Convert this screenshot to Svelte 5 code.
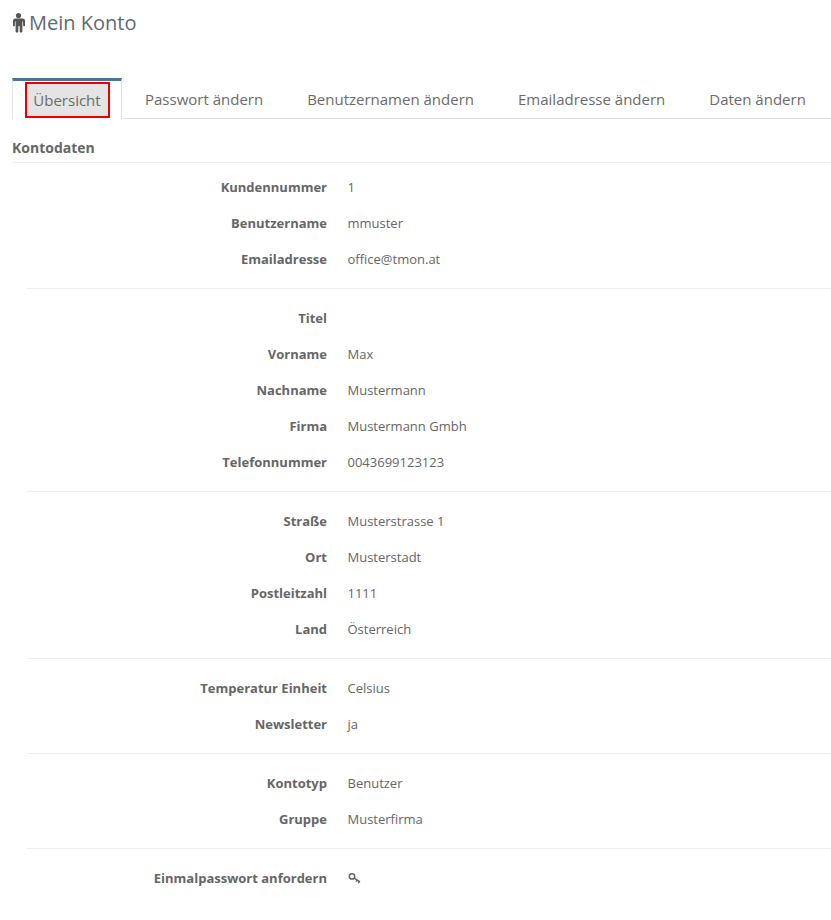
<script>
  const tabs = ["Übersicht", "Passwort ändern", "Benutzernamen ändern", "Emailadresse ändern", "Daten ändern"];

  const groups = [
    [
      ["Kundennummer", "1"],
      ["Benutzername", "mmuster"],
      ["Emailadresse", "office@tmon.at"]
    ],
    [
      ["Titel", ""],
      ["Vorname", "Max"],
      ["Nachname", "Mustermann"],
      ["Firma", "Mustermann Gmbh"],
      ["Telefonnummer", "0043699123123"]
    ],
    [
      ["Straße", "Musterstrasse 1"],
      ["Ort", "Musterstadt"],
      ["Postleitzahl", "1111"],
      ["Land", "Österreich"]
    ],
    [
      ["Temperatur Einheit", "Celsius"],
      ["Newsletter", "ja"]
    ],
    [
      ["Kontotyp", "Benutzer"],
      ["Gruppe", "Musterfirma"]
    ]
  ];
</script>

<div class="page">
  <h1>
    <svg class="man" viewBox="0 0 13 20" width="13" height="20" aria-hidden="true">
      <circle cx="6.5" cy="2.6" r="2.6" />
      <path d="M2.4 5.6h8.2c1.4 0 2.4 1 2.4 2.2v4.8c0 1.1-1.9 1.1-1.9 0V8.4h-.7v10.2c0 1.5-2.7 1.5-2.7 0V13.2h-1.4v5.4c0 1.5-2.7 1.5-2.7 0V8.4h-.7v4.2c0 1.1-1.9 1.1-1.9 0V7.8c0-1.2 1-2.2 2.4-2.2z" />
    </svg>
    Mein Konto
  </h1>

  <nav class="tabs">
    {#each tabs as tab, i}
      <div class="tab" class:active={i === 0}>
        <span class:marked={i === 0}>{tab}</span>
      </div>
    {/each}
  </nav>

  <h2>Kontodaten</h2>

  <div class="groups">
    {#each groups as rows}
      <section class="group">
        {#each rows as [label, value]}
          <div class="row">
            <div class="label">{label}</div>
            <div class="value">{value}</div>
          </div>
        {/each}
      </section>
    {/each}
    <section class="group last">
      <div class="row">
        <div class="label">Einmalpasswort anfordern</div>
        <div class="value">
          <svg class="key" viewBox="0 0 13 13" width="13" height="13" aria-hidden="true">
            <circle cx="4" cy="4.4" r="2.7" />
            <path d="M6.2 6.2l5.8 3.8M9 8l-.9 1.7M11.2 9.4l-.8 1.8" />
          </svg>
        </div>
      </div>
    </section>
  </div>
</div>

<style>
  :global(body) {
    background: #fff;
  }

  .page {
    padding: 0 0 22px 12px;
    font-family: "Open Sans", sans-serif;
    color: #666;
  }

  h1 {
    display: flex;
    align-items: center;
    gap: 4px;
    margin: 0;
    height: 78px;
    padding-bottom: 33px;
    box-sizing: border-box;
    font-size: 20px;
    font-weight: 400;
    color: #606a73;
  }

  .man {
    fill: #555;
  }

  .tabs {
    display: flex;
    height: 41px;
    box-sizing: border-box;
    border-bottom: 1px solid #e2e2e2;
  }

  .tab {
    display: flex;
    align-items: center;
    justify-content: center;
    box-sizing: border-box;
    height: 41px;
    padding: 0 22px;
    font-size: 15px;
    color: #6b6b6b;
  }

  .tab.active {
    width: 110px;
    margin-right: 1px;
    padding: 0;
    border: 1px solid #e2e2e2;
    border-top: 3px solid #4a7596;
    border-bottom: 0;
    background: #fff;
  }

  .marked {
    display: block;
    box-sizing: border-box;
    width: 85px;
    height: 36px;
    margin-bottom: 1px;
    line-height: 32px;
    text-align: center;
    border: 2px solid #ee0000;
    background: #e4e4e4;
  }

  h2 {
    margin: 0;
    height: 44px;
    line-height: 58px;
    box-sizing: border-box;
    border-bottom: 1px solid #eee;
    font-size: 14px;
    font-weight: 700;
    color: #666;
  }

  .group {
    display: flex;
    flex-direction: column;
    margin-left: 15px;
    padding: 11px 0;
    border-bottom: 1px solid #eee;
  }

  .group:first-child {
    padding-top: 6px;
  }

  .group.last {
    border-bottom: 0;
  }

  .row {
    display: flex;
    align-items: center;
    gap: 20.5px;
    height: 36px;
    font-size: 13px;
  }

  .label {
    width: 300px;
    text-align: right;
    font-weight: 700;
  }

  .value {
    display: flex;
    align-items: center;
  }

  .key {
    fill: none;
    stroke: #666;
    stroke-width: 1.5;
  }
</style>
